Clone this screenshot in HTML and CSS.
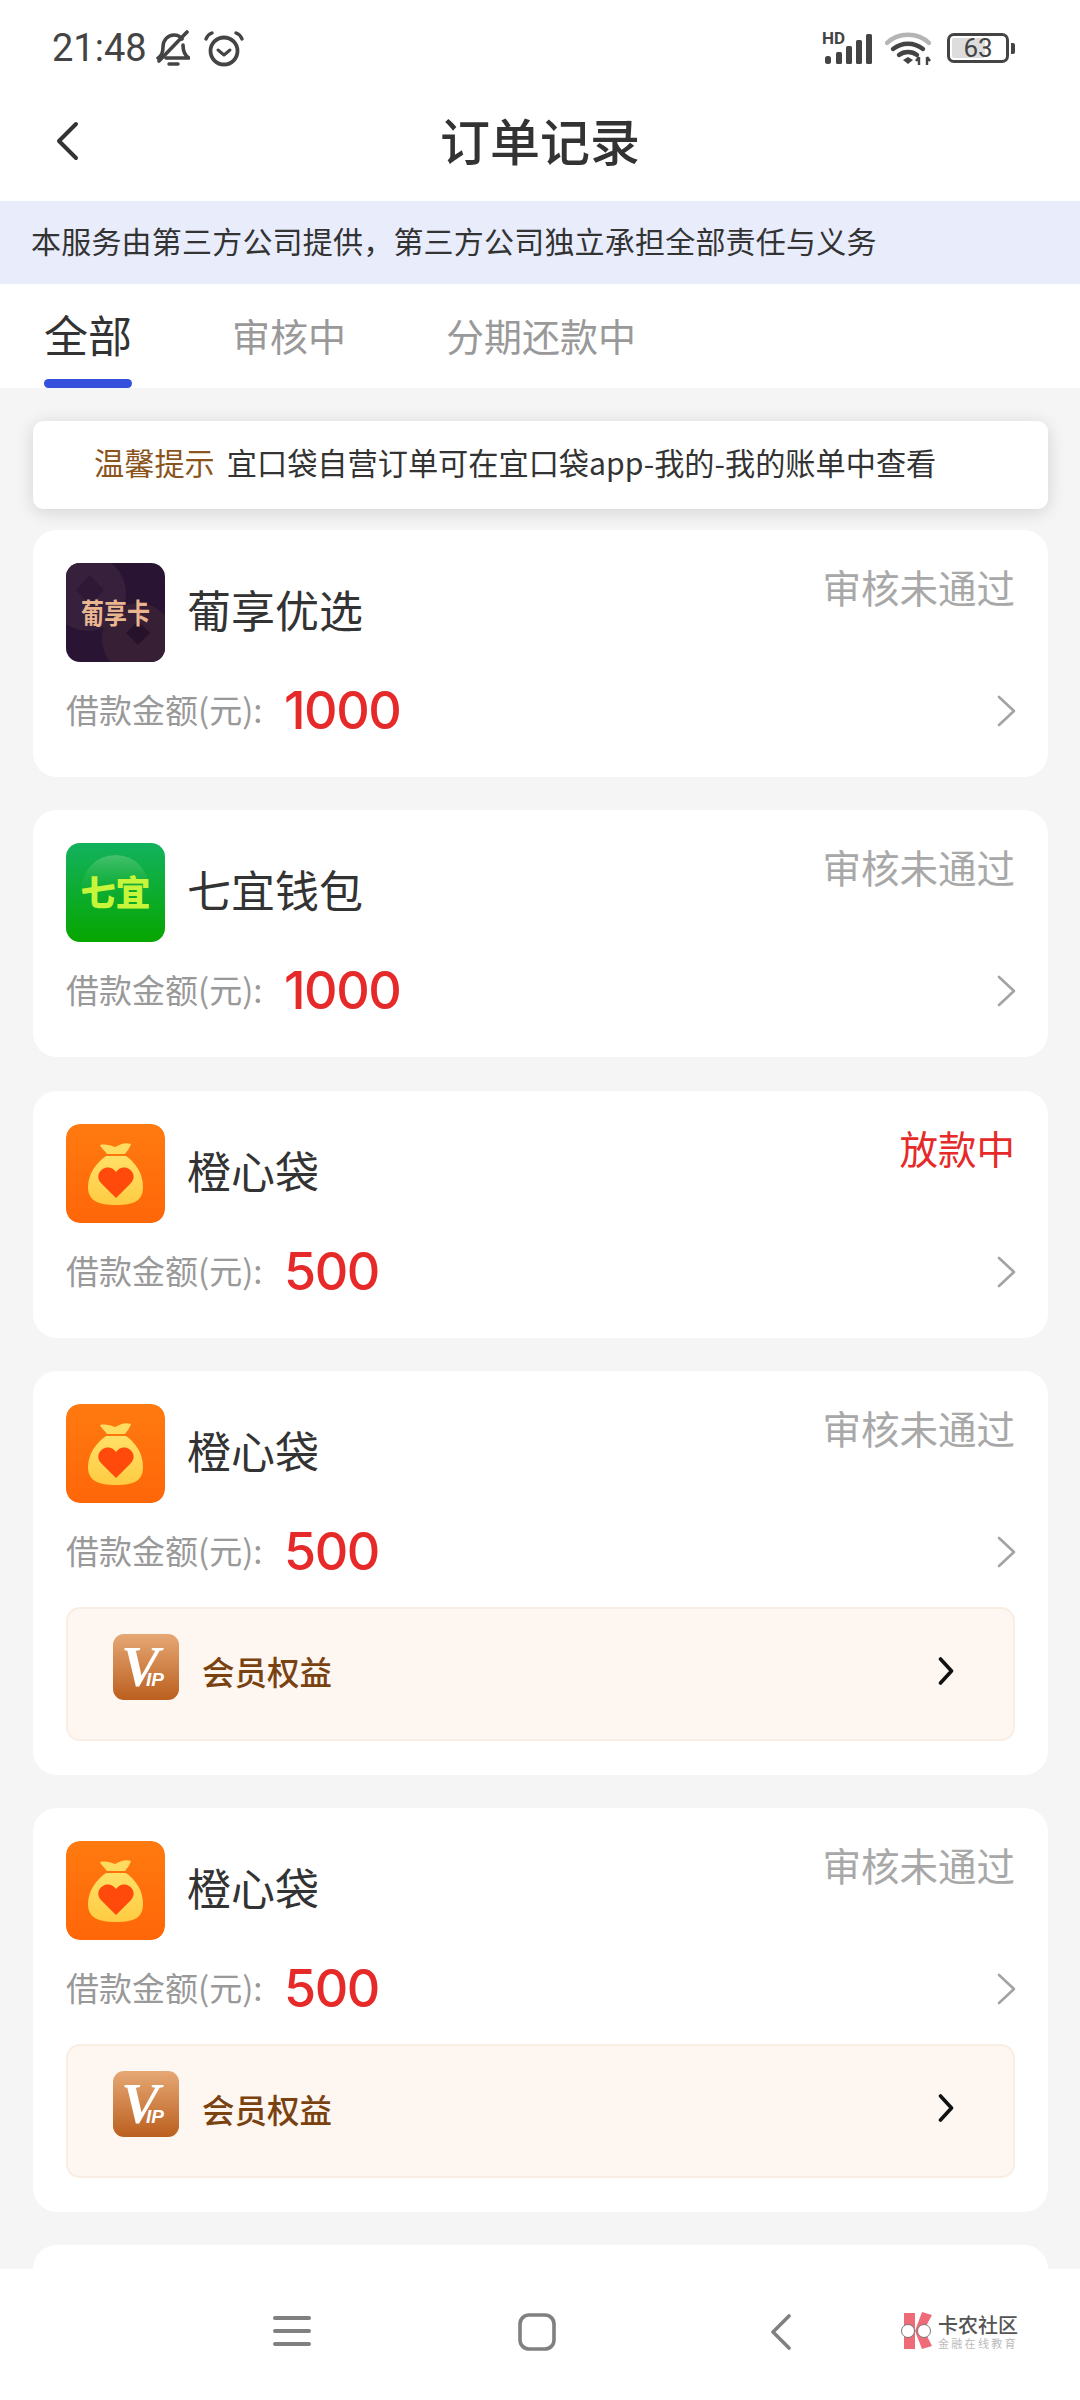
FILE: index.html
```html
<!DOCTYPE html>
<html lang="zh">
<head>
    <meta charset="UTF-8">
    <meta name="viewport" content="width=device-width, initial-scale=1.0">
    <title>订单记录</title>
    <link rel="stylesheet" href="styles.css">
</head>
<body>
    <!-- 图标定义 -->
    <svg class="defs" width="0" height="0">
        <defs>
            <linearGradient id="orangeBg" x1="0" y1="0" x2="0" y2="1">
                <stop offset="0" stop-color="#ff7a10"/>
                <stop offset="1" stop-color="#ff6608"/>
            </linearGradient>
            <linearGradient id="bagFill" x1="0" y1="0" x2="0" y2="1">
                <stop offset="0" stop-color="#ffe066"/>
                <stop offset="1" stop-color="#ffcb42"/>
            </linearGradient>
            <linearGradient id="greenBg" x1="0" y1="0" x2="0" y2="1">
                <stop offset="0" stop-color="#12b25e"/>
                <stop offset="1" stop-color="#06a600"/>
            </linearGradient>
            <linearGradient id="greenDome" x1="0" y1="0" x2="0" y2="1">
                <stop offset="0" stop-color="#5cc878" stop-opacity="0.7"/>
                <stop offset="0.6" stop-color="#20b040" stop-opacity="0"/>
            </linearGradient>
            <linearGradient id="vipBg" x1="0" y1="0" x2="0" y2="1">
                <stop offset="0" stop-color="#e6a874"/>
                <stop offset="1" stop-color="#bb5f1f"/>
            </linearGradient>
            <symbol id="chengxin" viewBox="0 0 99 99">
                <rect width="99" height="99" rx="14" fill="url(#orangeBg)"/>
                <path d="M34 21c5-1 10 0 15 2 4-2 10-5 16-3-1 4-4 7-6 10H41c-2-3-6-6-7-9z" fill="#ffdc5f"/>
                <path d="M40 32h20c10 7 17 18 17 31 0 13-8 18-27 18S22 76 22 63c0-13 8-24 18-31z" fill="url(#bagFill)"/>
                <path d="M50 74 35 59c-9-10 7-22 15-11 8-11 24 1 15 11z" fill="#ff4a0c"/>
            </symbol>
            <symbol id="chevronGray" viewBox="0 0 22 34">
                <path d="M3 3l15 14L3 31" fill="none" stroke="#a3a3a3" stroke-width="2.6" stroke-linecap="round" stroke-linejoin="round"/>
            </symbol>
            <symbol id="vipIcon" viewBox="0 0 66 66">
                <rect width="66" height="66" rx="11" fill="url(#vipBg)"/>
                <text class="vip-v" x="8" y="52">V</text>
                <text class="vip-ip" x="33" y="52">IP</text>
            </symbol>
            <symbol id="chevronDark" viewBox="0 0 16 30">
                <path d="M2.5 3l11 12-11 12" fill="none" stroke="#111" stroke-width="3.6" stroke-linecap="round" stroke-linejoin="round"/>
            </symbol>
        </defs>
    </svg>

    <!-- 状态栏 -->
    <div class="status-bar">
        <div class="status-left">
            <span class="clock">21:48</span>
            <svg class="bell" width="34" height="36" viewBox="0 0 34 36">
                <path d="M2 28c4-2 5-6 5-11 0-7 5-12 11-12 3 0 6 1 8 4M27 15c0 6 1 10 6 13H10" fill="none" stroke="#444" stroke-width="3.6" stroke-linejoin="round" stroke-linecap="round"/>
                <path d="M3 31 31 2" stroke="#444" stroke-width="3.6" stroke-linecap="round"/>
                <path d="M13 34h9" stroke="#444" stroke-width="3.4" stroke-linecap="round"/>
            </svg>
            <svg class="alarm" width="40" height="37" viewBox="0 0 40 37">
                <circle cx="20" cy="21" r="13.5" fill="none" stroke="#444" stroke-width="3.8"/>
                <path d="M14 20l6 5 6-5" fill="none" stroke="#444" stroke-width="3" stroke-linecap="round" stroke-linejoin="round"/>
                <path d="M2 9c1-3 3-5 6-6M38 9c-1-3-3-5-6-6" fill="none" stroke="#444" stroke-width="3.4" stroke-linecap="round"/>
            </svg>
        </div>
        <div class="status-right">
            <div class="signal">
                <span class="hd">HD</span>
                <svg width="50" height="32" viewBox="0 0 50 32">
                    <rect x="3" y="24" width="6" height="8" rx="2.5" fill="#444"/>
                    <rect x="14" y="20" width="6" height="12" rx="1.5" fill="#444"/>
                    <rect x="24" y="14" width="6" height="18" rx="1.5" fill="#444"/>
                    <rect x="34" y="8" width="6" height="24" rx="1.5" fill="#444"/>
                    <rect x="44" y="2" width="6" height="30" rx="1.5" fill="#444"/>
                </svg>
            </div>
            <svg class="wifi" width="46" height="35" viewBox="0 0 46 35">
                <path d="M2 12C13 1 33 1 44 12" fill="none" stroke="#b5b5b5" stroke-width="4.4" stroke-linecap="round"/>
                <path d="M8 18c9-7 21-7 30 0" fill="none" stroke="#444" stroke-width="4.4" stroke-linecap="round"/>
                <path d="M14 24c5-4 13-4 18 0" fill="none" stroke="#444" stroke-width="4.4" stroke-linecap="round"/>
                <path d="M18 29l5-3 5 3-5 4z" fill="#444"/>
                <path d="M34 26v8M31 30l3-4M42 34v-8M42 26l3 4" stroke="#444" stroke-width="2.4" fill="none"/>
            </svg>
            <div class="battery">
                <div class="battery-body">
                    <span class="battery-fill"></span>
                    <span class="battery-num">63</span>
                </div>
                <span class="battery-cap"></span>
            </div>
        </div>
    </div>

    <!-- 标题栏 -->
    <div class="nav-bar">
        <svg class="back" width="24" height="40" viewBox="0 0 24 40">
            <path d="M21 3 4 20l17 17" fill="none" stroke="#333" stroke-width="4" stroke-linecap="round" stroke-linejoin="round"/>
        </svg>
        <h1>订单记录</h1>
    </div>

    <div class="banner">本服务由第三方公司提供，第三方公司独立承担全部责任与义务</div>

    <div class="tabs">
        <a class="tab current">全部</a>
        <a class="tab">审核中</a>
        <a class="tab">分期还款中</a>
    </div>

    <div class="content">
        <div class="notice">
            <span class="notice-tag">温馨提示</span>
            <span>宜口袋自营订单可在宜口袋app-我的-我的账单中查看</span>
        </div>

        <div class="card">
            <div class="card-head">
                <svg class="logo" viewBox="0 0 99 99">
                    <rect width="99" height="99" fill="#2a1433"/>
                    <circle cx="22" cy="30" r="38" fill="#37203c"/>
                    <circle cx="72" cy="76" r="36" fill="#372036"/>
                    <path d="M24 12 38 27 24 42 10 27z" fill="#2f1836"/>
                    <path d="M72 58 84 70 72 82 60 70z" fill="#27122c"/>
                    <text class="logo-pu" x="49.5" y="50" transform="scale(1 1.22)">葡享卡</text>
                </svg>
                <span class="name">葡享优选</span>
                <span class="state">审核未通过</span>
            </div>
            <div class="amount-row">
                <span class="amount-label">借款金额(元):</span>
                <span class="amount">1000</span>
                <svg class="chevron"><use href="#chevronGray"/></svg>
            </div>
        </div>

        <div class="card">
            <div class="card-head">
                <svg class="logo" viewBox="0 0 99 99">
                    <rect width="99" height="99" fill="url(#greenBg)"/>
                    <circle cx="49.5" cy="46" r="34" fill="url(#greenDome)"/>
                    <text class="logo-qi" x="49.5" y="63">七宜</text>
                </svg>
                <span class="name">七宜钱包</span>
                <span class="state">审核未通过</span>
            </div>
            <div class="amount-row">
                <span class="amount-label">借款金额(元):</span>
                <span class="amount">1000</span>
                <svg class="chevron"><use href="#chevronGray"/></svg>
            </div>
        </div>

        <div class="card">
            <div class="card-head">
                <svg class="logo"><use href="#chengxin"/></svg>
                <span class="name">橙心袋</span>
                <span class="state red">放款中</span>
            </div>
            <div class="amount-row">
                <span class="amount-label">借款金额(元):</span>
                <span class="amount">500</span>
                <svg class="chevron"><use href="#chevronGray"/></svg>
            </div>
        </div>

        <div class="card">
            <div class="card-head">
                <svg class="logo"><use href="#chengxin"/></svg>
                <span class="name">橙心袋</span>
                <span class="state">审核未通过</span>
            </div>
            <div class="amount-row">
                <span class="amount-label">借款金额(元):</span>
                <span class="amount">500</span>
                <svg class="chevron"><use href="#chevronGray"/></svg>
            </div>
            <div class="vip-box">
                <svg class="vip-icon"><use href="#vipIcon"/></svg>
                <span class="vip-text">会员权益</span>
                <svg class="vip-arrow"><use href="#chevronDark"/></svg>
            </div>
        </div>

        <div class="card">
            <div class="card-head">
                <svg class="logo"><use href="#chengxin"/></svg>
                <span class="name">橙心袋</span>
                <span class="state">审核未通过</span>
            </div>
            <div class="amount-row">
                <span class="amount-label">借款金额(元):</span>
                <span class="amount">500</span>
                <svg class="chevron"><use href="#chevronGray"/></svg>
            </div>
            <div class="vip-box">
                <svg class="vip-icon"><use href="#vipIcon"/></svg>
                <span class="vip-text">会员权益</span>
                <svg class="vip-arrow"><use href="#chevronDark"/></svg>
            </div>
        </div>

        <div class="card"></div>
    </div>

    <!-- 底部导航 -->
    <div class="bottom-bar">
        <svg class="nav-menu" width="38" height="32" viewBox="0 0 38 32">
            <path d="M2 3h34M2 16h34M2 29h34" stroke="#808080" stroke-width="4" stroke-linecap="round"/>
        </svg>
        <svg class="nav-home" width="38" height="38" viewBox="0 0 38 38">
            <rect x="2" y="2" width="34" height="34" rx="9" fill="none" stroke="#808080" stroke-width="3.6"/>
        </svg>
        <svg class="nav-back" width="22" height="36" viewBox="0 0 22 36">
            <path d="M19 2 3 18l16 16" fill="none" stroke="#808080" stroke-width="3.6" stroke-linecap="round" stroke-linejoin="round"/>
        </svg>
        <div class="watermark">
            <svg width="36" height="38" viewBox="0 0 36 38">
                <path d="M4 1h11v36H4zM22 0l10 3-8 15 8 16-10 3-7-18z" fill="#ee6b78"/>
                <circle cx="8" cy="19" r="6.5" fill="#fff" stroke="#777" stroke-width="1"/>
                <circle cx="24" cy="19" r="6.5" fill="#fff" stroke="#777" stroke-width="1"/>
            </svg>
            <div class="watermark-text">
                <span class="wm-title">卡农社区</span>
                <span class="wm-sub">金融在线教育</span>
            </div>
        </div>
    </div>
</body>
</html>
```

FILE: styles.css
```css
* {
    box-sizing: border-box;
}
body {
    margin: 0;
    width: 1080px;
    height: 2400px;
    overflow: hidden;
    display: flex;
    flex-direction: column;
    background-color: #fff;
    color: #333;
    font-family: "Noto Sans CJK SC", "Noto Sans", sans-serif;
}
.defs {
    position: absolute;
}
/* 状态栏 */
.status-bar {
    height: 100px;
    flex: none;
    display: flex;
    justify-content: space-between;
    align-items: center;
    padding: 0 65px 4px 52px;
}
.status-left,
.status-right {
    display: flex;
    align-items: center;
}
.clock {
    font-family: Roboto, sans-serif;
    font-size: 38px;
    color: #444;
    margin-right: 9px;
}
.bell {
    margin-right: 14px;
}
.signal {
    position: relative;
    width: 50px;
    height: 32px;
    margin-right: 13px;
}
.signal svg {
    display: block;
}
.hd {
    position: absolute;
    left: 0;
    top: 0;
    font-family: Roboto, sans-serif;
    font-size: 17px;
    font-weight: 700;
    line-height: 13px;
    color: #444;
}
.wifi {
    margin-right: 16px;
}
.battery {
    display: flex;
    align-items: center;
}
.battery-body {
    position: relative;
    width: 62px;
    height: 30px;
    border: 3px solid #444;
    border-radius: 7px;
    padding: 2px;
    display: flex;
}
.battery-fill {
    width: 63%;
    background-color: #ddd;
    border-radius: 2px;
}
.battery-num {
    position: absolute;
    left: 0;
    right: 0;
    top: -3px;
    text-align: center;
    font-family: Roboto, sans-serif;
    font-size: 26px;
    line-height: 30px;
    color: #444;
}
.battery-cap {
    width: 4px;
    height: 11px;
    margin-left: 2px;
    background-color: #444;
    border-radius: 0 2px 2px 0;
}
/* 标题栏 */
.nav-bar {
    position: relative;
    height: 101px;
    flex: none;
    display: flex;
    align-items: center;
    justify-content: center;
    padding-bottom: 24px;
}
.back {
    position: absolute;
    left: 55px;
    top: 21px;
}
h1 {
    margin: 0;
    font-size: 50px;
    font-weight: 500;
    line-height: 76px;
    color: #333;
}
.banner {
    height: 83px;
    flex: none;
    padding-left: 31px;
    background-color: #e8ecfb;
    font-size: 30px;
    letter-spacing: 0.2px;
    line-height: 79px;
    color: #333;
}
/* 标签 */
.tabs {
    height: 104px;
    flex: none;
    display: flex;
    padding-left: 44px;
}
.tab {
    position: relative;
    font-size: 38px;
    line-height: 102px;
    color: #999;
    margin-right: 100px;
}
.tab.current {
    width: 88px;
    font-size: 44px;
    line-height: 100px;
    color: #333;
    margin-right: 100px;
}
.tab.current::after {
    content: "";
    position: absolute;
    left: 0;
    right: 0;
    bottom: 0;
    height: 9px;
    border-radius: 5px;
    background-color: #3550db;
}
.tab:last-child {
    margin-right: 0;
}
/* 列表 */
.content {
    flex: 1;
    min-height: 0;
    overflow: hidden;
    padding: 33px 32px 0 33px;
    background-color: #f5f5f5;
}
.notice {
    height: 88px;
    display: flex;
    align-items: center;
    padding: 0 0 6px 61px;
    margin-bottom: 21px;
    background-color: #fff;
    border-radius: 10px;
    box-shadow: 0 3px 18px rgba(0, 0, 0, 0.14);
    font-size: 30.2px;
    color: #333;
}
.notice-tag {
    color: #8a541c;
    margin-right: 12px;
}
.card {
    padding: 33px 33px 34px;
    margin-bottom: 33.3px;
    background-color: #fff;
    border-radius: 24px;
}
.card:last-child {
    height: 120px;
    margin-bottom: 0;
}
.card-head {
    display: flex;
    height: 99px;
    align-items: center;
}
.logo {
    width: 99px;
    height: 99px;
    flex: none;
    margin-right: 22px;
    border-radius: 14px;
}
.logo-pu {
    font-size: 23px;
    font-weight: 700;
    text-anchor: middle;
    fill: #eab68f;
}
.logo-qi {
    font-size: 35px;
    font-weight: 900;
    text-anchor: middle;
    fill: #c6f53a;
}
.name {
    flex: 1;
    font-size: 44px;
    color: #333;
    padding-bottom: 7px;
}
.state {
    align-self: flex-start;
    font-size: 38.5px;
    line-height: 46px;
    color: #a8a8a8;
}
.state.red {
    color: #e62a2a;
}
.amount-row {
    display: flex;
    align-items: center;
    height: 60px;
    margin: 19px 0 2px;
}
.amount-label {
    font-size: 33px;
    color: #999;
    width: 218px;
    padding-bottom: 4px;
}
.amount {
    flex: 1;
    font-family: Inter, sans-serif;
    font-size: 52px;
    font-weight: 500;
    letter-spacing: -1.5px;
    line-height: 60px;
    color: #e62a2a;
}
.chevron {
    width: 22px;
    height: 34px;
    flex: none;
    margin-right: -3px;
}
/* 会员权益 */
.vip-box {
    height: 134px;
    margin-top: 25px;
    display: flex;
    align-items: center;
    padding: 0 59px 0 45px;
    background-color: #fdf6f1;
    border: 2px solid #f9eee4;
    border-radius: 14px;
}
.vip-icon {
    width: 66px;
    height: 66px;
    flex: none;
    margin: 0 23px 14px 0;
}
.vip-v {
    font-family: "Liberation Serif", serif;
    font-size: 58px;
    font-weight: 700;
    font-style: italic;
    fill: #fff;
}
.vip-ip {
    font-family: "Liberation Sans", sans-serif;
    font-size: 19px;
    font-weight: 700;
    font-style: italic;
    fill: #fff;
}
.vip-text {
    flex: 1;
    font-size: 32.5px;
    font-weight: 500;
    color: #7a4210;
    padding-bottom: 6px;
}
.vip-arrow {
    width: 16px;
    height: 30px;
    flex: none;
    margin-bottom: 6px;
}
/* 底部导航 */
.bottom-bar {
    position: relative;
    height: 131px;
    flex: none;
    background-color: #fff;
}
.nav-menu {
    position: absolute;
    left: 273px;
    top: 46px;
}
.nav-home {
    position: absolute;
    left: 518px;
    top: 44px;
}
.nav-back {
    position: absolute;
    left: 770px;
    top: 45px;
}
.watermark {
    position: absolute;
    left: 900px;
    top: 43px;
    display: flex;
    align-items: center;
}
.watermark-text {
    display: flex;
    flex-direction: column;
    margin-left: 2px;
}
.wm-title {
    font-size: 20px;
    font-weight: 500;
    line-height: 24px;
    color: #555;
}
.wm-sub {
    font-size: 11px;
    line-height: 13px;
    letter-spacing: 2.3px;
    color: #bbb;
    white-space: nowrap;
}
```
